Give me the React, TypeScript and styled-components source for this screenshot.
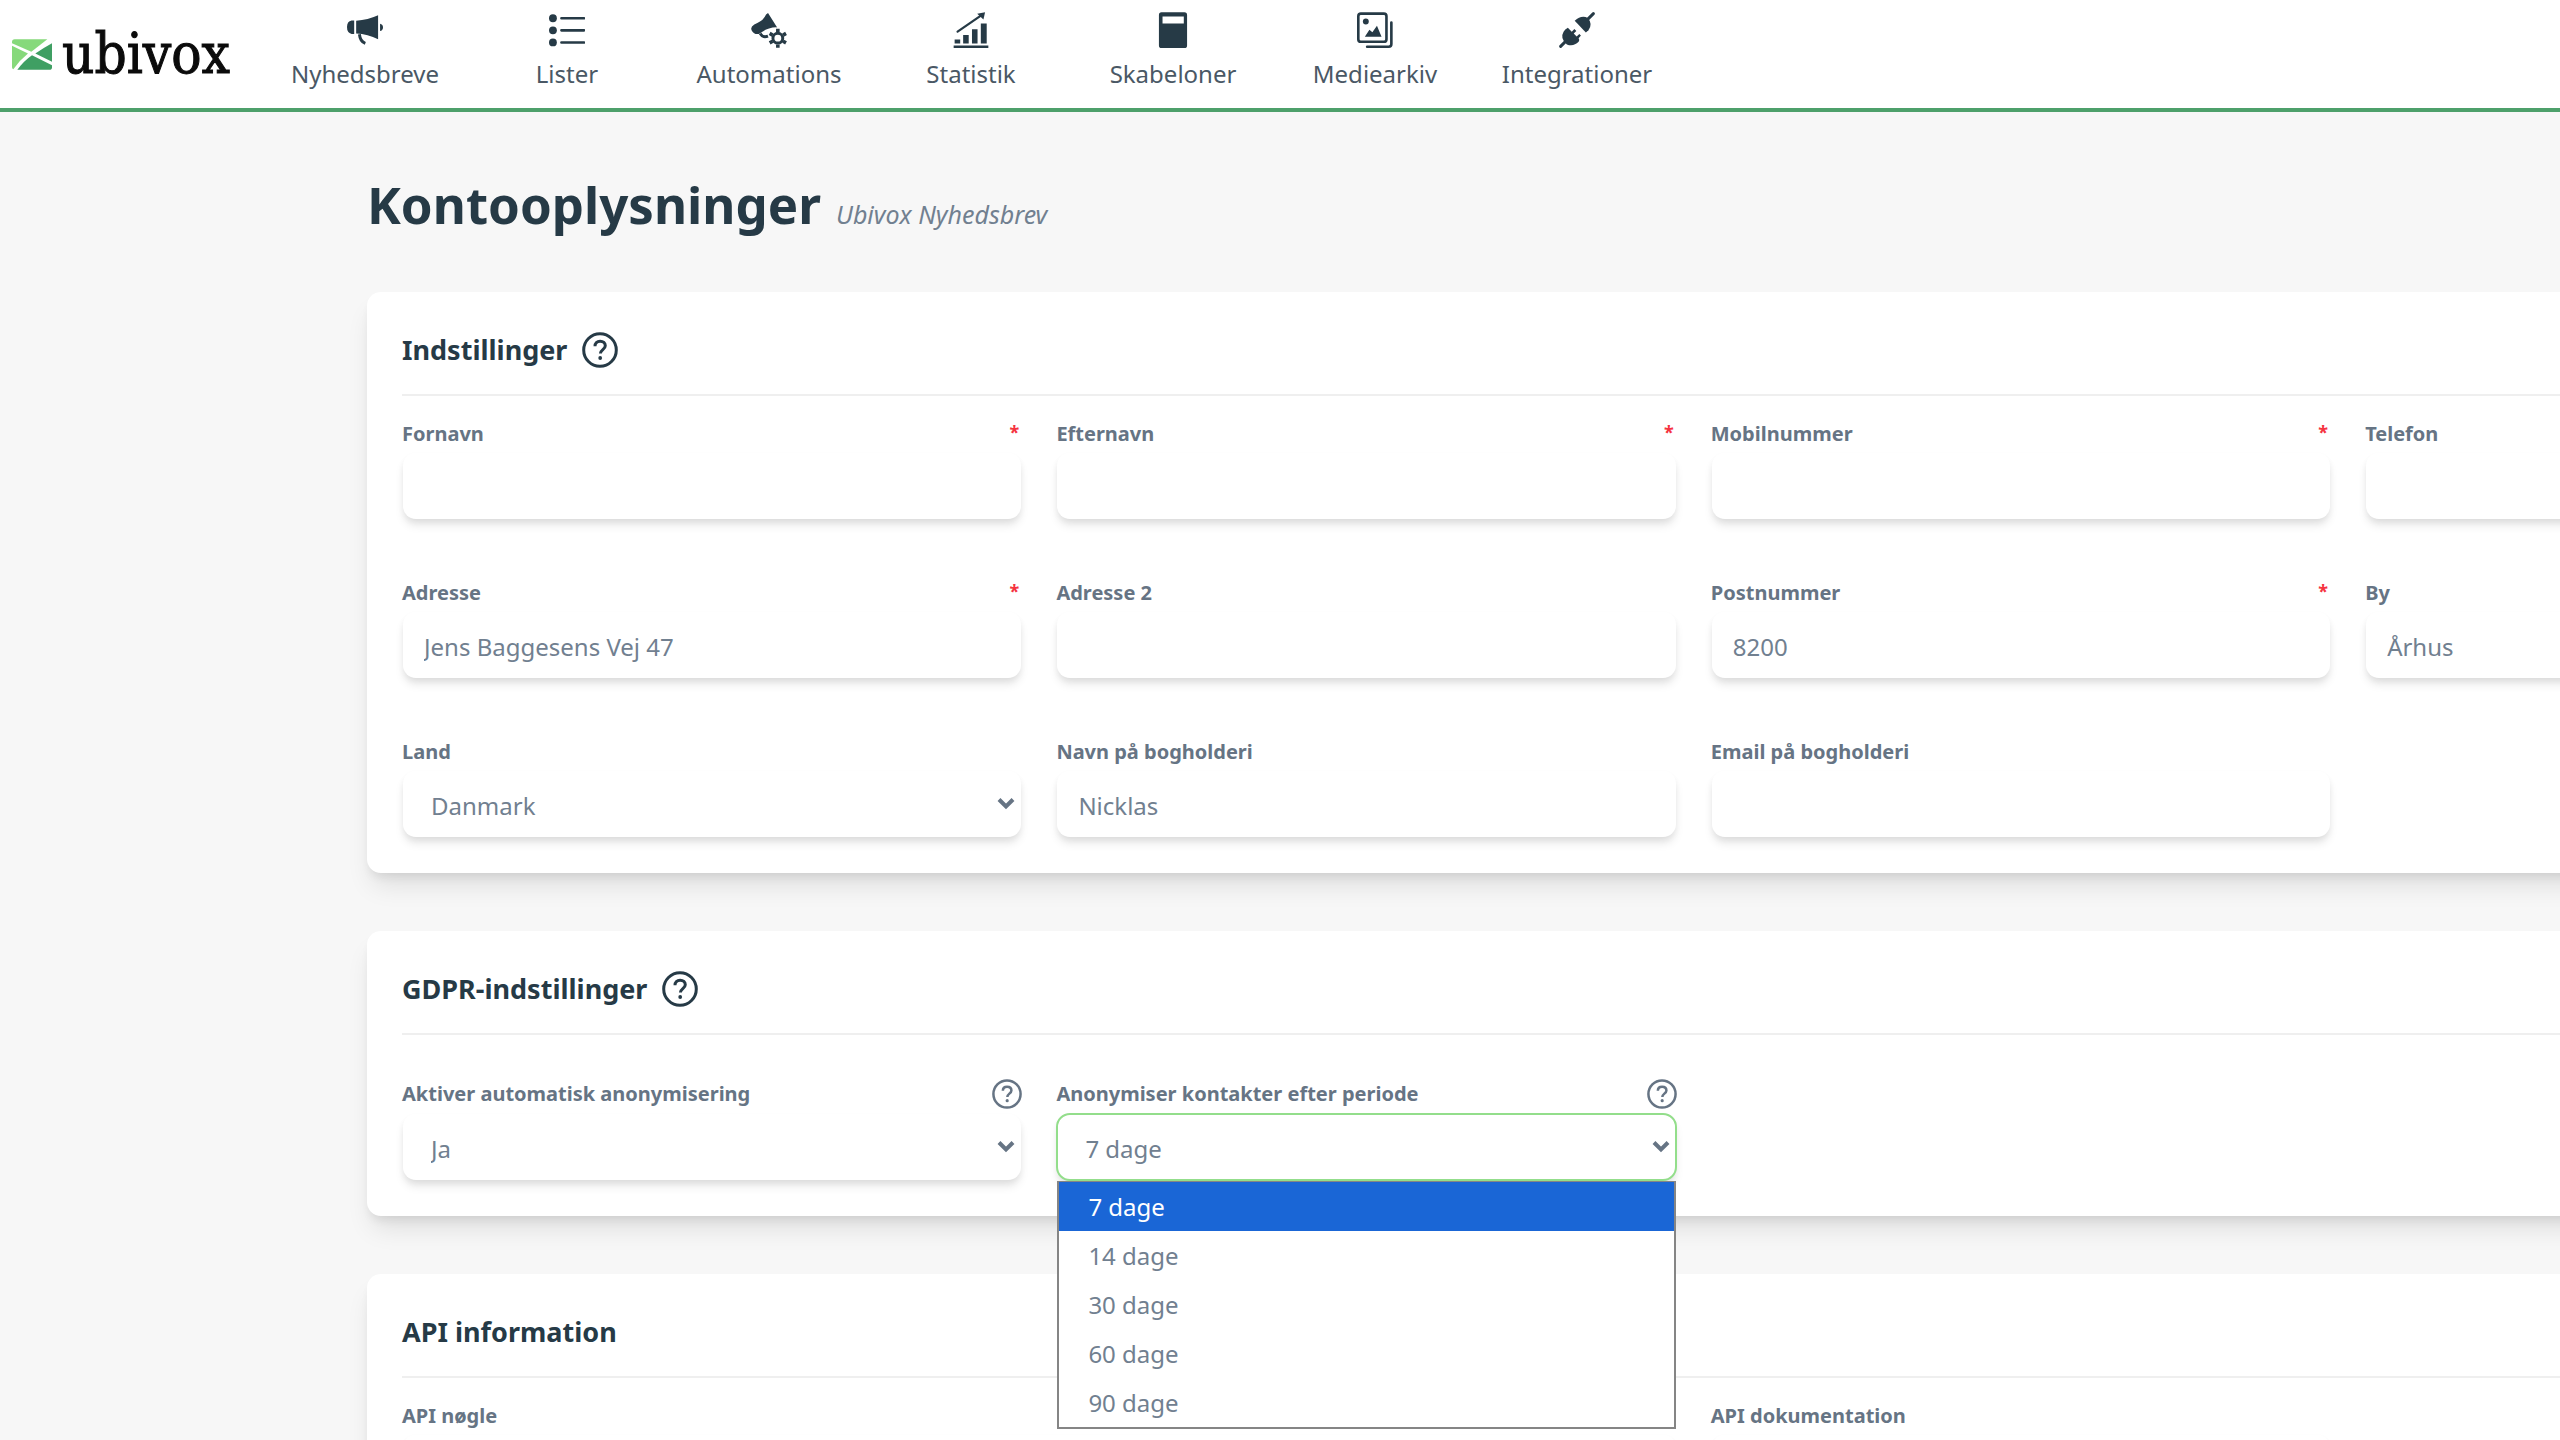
import React, { useId } from "react";
import styled, { createGlobalStyle, css } from "styled-components";

const color = {
  ink: "#263a46",
  nav: "#4a5865",
  label: "#667484",
  value: "#718090",
  green: "#4da06b",
  focus: "#93de8b",
  danger: "#f5333f",
  page: "#f7f7f7",
  line: "#efefef",
  select: "#1a66d6",
};

const GlobalStyle = createGlobalStyle`
  *, *::before, *::after { box-sizing: border-box; }
  body {
    margin: 0;
    background: ${color.page};
    color: ${color.ink};
    font-family: "Noto Sans", "Open Sans", sans-serif;
  }
  input, select, button { font: inherit; }
`;

const Page = styled.div`
  height: 100vh;
  overflow: hidden;
`;

/* ---------- top bar ---------- */

const TopBar = styled.header`
  display: flex;
  height: 112px;
  background: #fff;
  border-bottom: 4px solid ${color.green};
`;

const Brand = styled.a`
  display: flex;
  align-items: center;
  gap: 10px;
  width: 264px;
  padding-left: 12px;
  color: #0b0b0b;
  text-decoration: none;
`;

const BrandName = styled.span`
  font-family: "DejaVu Serif Condensed", "DejaVu Serif", serif;
  font-size: 56px;
  line-height: 64px;
  -webkit-text-stroke: 1px currentColor;
`;

const Nav = styled.nav`
  display: flex;
`;

const NavLink = styled.a`
  display: flex;
  flex-direction: column;
  align-items: center;
  gap: 10px;
  width: 202px;
  padding-top: 12px;
  color: ${color.nav};
  font-size: 24px;
  line-height: 32px;
  text-decoration: none;
`;

const NavIcon = styled.svg`
  width: 36px;
  height: 36px;
  color: ${color.ink};
  fill: currentColor;
`;

/* ---------- content ---------- */

const Content = styled.main`
  width: 121%;
  display: flex;
  flex-direction: column;
  gap: 58px;
`;

const Frame = styled.div`
  padding: 58px 0 0 367px;
`;

const TitleRow = styled.div`
  display: flex;
  align-items: baseline;
  gap: 15px;
  margin-bottom: 54px;
`;

const Title = styled.h1`
  margin: 0;
  font-size: 51px;
  line-height: 68px;
  font-weight: 700;
`;

const Subtitle = styled.em`
  color: ${color.value};
  font-size: 25px;
  line-height: 32px;
`;

const Card = styled.section`
  padding: 40px 35px 35px;
  background: #fff;
  border-radius: 14px;
  box-shadow: 0 17px 26px -5px rgba(0, 0, 0, 0.1), 0 7px 10px -3px rgba(0, 0, 0, 0.08);
`;

const CardHeading = styled.h2`
  display: flex;
  align-items: center;
  gap: 15px;
  margin: 0;
  padding-bottom: 26px;
  border-bottom: 2px solid ${color.line};
  font-size: 27px;
  line-height: 36px;
  font-weight: 700;
`;

const Fields = styled.div<{ $roomy?: boolean }>`
  display: grid;
  grid-template-columns: repeat(4, 1fr);
  gap: 59px 34px;
  padding-top: ${(p) => (p.$roomy ? 44 : 24)}px;
`;

const FieldBox = styled.div<{ $span?: number }>`
  position: relative;
  display: flex;
  flex-direction: column;
  gap: 4px;
  grid-column: span ${(p) => p.$span ?? 1};
`;

const LabelRow = styled.div`
  display: flex;
  justify-content: space-between;
  align-items: center;
`;

const Label = styled.label`
  color: ${color.label};
  font-size: 20px;
  line-height: 28px;
  font-weight: 700;
`;

const Required = styled.span`
  align-self: flex-start;
  padding-right: 3px;
  color: ${color.danger};
  font-size: 18px;
  line-height: 24px;
  font-weight: 700;
`;

const control = css`
  width: 100%;
  height: 68px;
  border: 2px solid transparent;
  border-radius: 14px;
  background: #fff;
  background-clip: padding-box;
  color: ${color.value};
  font-size: 24px;
  line-height: 32px;
  outline: none;
  box-shadow: 0 7px 10px -2px rgba(0, 0, 0, 0.1), 0 3px 7px -2px rgba(0, 0, 0, 0.06);
`;

const TextInput = styled.input`
  ${control}
  padding: 3px 20px 0;
`;

const SelectWrap = styled.div`
  display: grid;
  align-items: center;
  & > * { grid-area: 1 / 1; }
`;

const Select = styled.select<{ $open?: boolean }>`
  ${control}
  appearance: none;
  padding: 3px 40px 0 27px;
  ${(p) => p.$open && css`border-color: ${color.focus};`}
`;

const Chevron = styled.svg`
  justify-self: end;
  width: 18px;
  height: 12px;
  margin-right: 7px;
  fill: none;
  stroke: ${color.label};
  stroke-width: 4;
  pointer-events: none;
`;

const HelpButton = styled.button<{ $size: number }>`
  display: flex;
  padding: 0;
  border: 0;
  background: none;
  color: ${(p) => (p.$size > 30 ? color.ink : color.label)};
  svg {
    width: ${(p) => p.$size}px;
    height: ${(p) => p.$size}px;
  }
`;

const Menu = styled.ul`
  position: absolute;
  z-index: 2;
  top: 100%;
  left: 1px;
  right: 1px;
  margin: 0;
  padding: 0;
  list-style: none;
  background: #fff;
  border: 2px solid #858585;
  border-top-width: 1px;
`;

const MenuItem = styled.li<{ $active: boolean }>`
  padding: 0 29px;
  font-size: 24px;
  line-height: 49px;
  color: ${(p) => (p.$active ? "#fff" : color.value)};
  background: ${(p) => (p.$active ? color.select : "transparent")};
`;

/* ---------- parts ---------- */

function Help({ size, about }: { size: number; about: string }) {
  return (
    <HelpButton type="button" $size={size} aria-label={`Hjælp: ${about}`}>
      <svg viewBox="0 0 36 36" fill="none" stroke="currentColor" strokeWidth="3">
        <circle cx="18" cy="18" r="16.3" />
        <path d="M13 14.200c0-3 2-5 5.100-5s5.200 1.900 5.200 4.500c0 3.700-4.900 4-4.900 7.800" />
        <circle cx="18.200" cy="26" r="1.900" fill="currentColor" stroke="none" />
      </svg>
    </HelpButton>
  );
}

type FieldProps = {
  label: string;
  value?: string;
  required?: boolean;
  help?: boolean;
  span?: number;
  choices?: string[];
  open?: boolean;
};

function Field({ label, value = "", required, help, span, choices, open }: FieldProps) {
  const id = useId();
  return (
    <FieldBox $span={span}>
      <LabelRow>
        <Label htmlFor={id}>{label}</Label>
        {required && <Required>*</Required>}
        {help && <Help size={30} about={label} />}
      </LabelRow>
      {choices ? (
        <SelectWrap>
          <Select id={id} defaultValue={value} $open={open}>
            {choices.map((c) => (
              <option key={c}>{c}</option>
            ))}
          </Select>
          <Chevron viewBox="0 0 18 12" aria-hidden="true">
            <path d="M2 1.500 9 8.500l7-7" />
          </Chevron>
        </SelectWrap>
      ) : (
        <TextInput id={id} type="text" defaultValue={value} />
      )}
      {open && choices && (
        <Menu role="listbox" aria-label={label}>
          {choices.map((c) => (
            <MenuItem key={c} role="option" aria-selected={c === value} $active={c === value}>
              {c}
            </MenuItem>
          ))}
        </Menu>
      )}
    </FieldBox>
  );
}

const navItems: { label: string; icon: React.ReactNode }[] = [
  {
    label: "Nyhedsbreve",
    icon: (
      <>
        <path d="M22 26v41h-8Q0 64 0 46t14-20z" />
        <path d="M28 27Q64 24 95 10v73Q64 68 28 66z" />
        <path d="M101 36q9 2 9 11t-9 11z" />
        <path d="M38 68q2 22 18 28" fill="none" stroke="currentColor" strokeWidth="9" />
      </>
    ),
  },
  {
    label: "Lister",
    icon: (
      <>
        <circle cx="12" cy="19" r="12" />
        <circle cx="12" cy="56" r="12" />
        <circle cx="12" cy="93" r="12" />
        <path d="M38 19h69M38 56h69M38 93h69" stroke="currentColor" strokeWidth="8" strokeLinecap="round" />
      </>
    ),
  },
  {
    label: "Automations",
    icon: (
      <>
        <path d="M52 3 80 47Q56 46 34 61L24 67Q10 70 3 58T10 38Q38 28 46 8z" />
        <path d="M28 66q8 14 24 8" fill="none" stroke="currentColor" strokeWidth="9" />
        <circle cx="82" cy="80" r="15" fill="none" stroke="currentColor" strokeWidth="9" />
        <path
          d="M82 51v10M82 99v10M57 65.500l9 5M98 89.500l9 5M57 94.500l9-5M98 70.500l9-5"
          stroke="currentColor"
          strokeWidth="11"
        />
      </>
    ),
  },
  {
    label: "Statistik",
    icon: (
      <>
        <path d="M2 102h106v8H2zM5 84h17v12H5zM31 70h17v26H31zM58 53h17v43H58zM85 35h18v61H85z" />
        <path d="M14 60 84 12" stroke="currentColor" strokeWidth="7" strokeLinecap="round" />
        <path d="M98 1 93 23 74 5z" />
      </>
    ),
  },
  {
    label: "Skabeloner",
    icon: <path fillRule="evenodd" d="M20 1h70q8 0 8 8v93q0 8-8 8H20q-8 0-8-8V9q0-8 8-8zm3 13v21h65V14z" />,
  },
  {
    label: "Mediearkiv",
    icon: (
      <>
        <rect x="4" y="5" width="86" height="86" rx="8" fill="none" stroke="currentColor" strokeWidth="8" />
        <circle cx="27" cy="29" r="9" />
        <path d="M24 76 38 54l9 8 14-20 14 34z" />
        <path d="M105 32v66q0 8-8 8H31" fill="none" stroke="currentColor" strokeWidth="8" strokeLinecap="round" />
      </>
    ),
  },
  {
    label: "Integrationer",
    icon: (
      <>
        <path d="M105 5 86 24M5 105l19-19" stroke="currentColor" strokeWidth="9" strokeLinecap="round" />
        <path d="M48 27Q68 8 88 18 104 36 90 56L82 63z" />
        <path d="M27 48 39 60l8-8 6 6-8 8 9 9 8-8 5 5-7 8q4 5 0 11-16 16-36 8Q2 80 14 60 18 52 27 48z" />
      </>
    ),
  },
];

const periods = ["7 dage", "14 dage", "30 dage", "60 dage", "90 dage"];

export default function App() {
  return (
    <Page>
      <GlobalStyle />
      <TopBar>
        <Brand href="#">
          <svg width="40" height="31" viewBox="0 0 120 92" aria-hidden="true">
            <path d="M8 0H106L58 38 0 12V8Q0 0 8 0z" fill="#86d97b" />
            <path d="M0 20 48 43Q24 62 4 90 0 88 0 84z" fill="#86d97b" />
            <path d="M120 12V68L70 43Q94 26 120 12z" fill="#3f9f63" />
            <path d="M60 48 120 78v6q0 8-8 8H16Q34 66 60 48z" fill="#3f9f63" />
          </svg>
          <BrandName>ubivox</BrandName>
        </Brand>
        <Nav>
          {navItems.map((item) => (
            <NavLink key={item.label} href="#">
              <NavIcon viewBox="0 0 110 110" aria-hidden="true">
                {item.icon}
              </NavIcon>
              {item.label}
            </NavLink>
          ))}
        </Nav>
      </TopBar>

      <Frame>
        <TitleRow>
          <Title>Kontooplysninger</Title>
          <Subtitle>Ubivox Nyhedsbrev</Subtitle>
        </TitleRow>
        <Content>
          <Card>
            <CardHeading>
              Indstillinger
              <Help size={36} about="Indstillinger" />
            </CardHeading>
            <Fields>
              <Field label="Fornavn" required />
              <Field label="Efternavn" required />
              <Field label="Mobilnummer" required />
              <Field label="Telefon" />
              <Field label="Adresse" value="Jens Baggesens Vej 47" required />
              <Field label="Adresse 2" />
              <Field label="Postnummer" value="8200" required />
              <Field label="By" value="Århus" />
              <Field label="Land" value="Danmark" choices={["Danmark"]} />
              <Field label="Navn på bogholderi" value="Nicklas" />
              <Field label="Email på bogholderi" />
            </Fields>
          </Card>

          <Card>
            <CardHeading>
              GDPR-indstillinger
              <Help size={36} about="GDPR-indstillinger" />
            </CardHeading>
            <Fields $roomy>
              <Field label="Aktiver automatisk anonymisering" value="Ja" choices={["Ja", "Nej"]} help />
              <Field label="Anonymiser kontakter efter periode" value="7 dage" choices={periods} help open />
            </Fields>
          </Card>

          <Card>
            <CardHeading>API information</CardHeading>
            <Fields>
              <Field label="API nøgle" span={2} />
              <Field label="API dokumentation" />
            </Fields>
          </Card>
        </Content>
      </Frame>
    </Page>
  );
}
